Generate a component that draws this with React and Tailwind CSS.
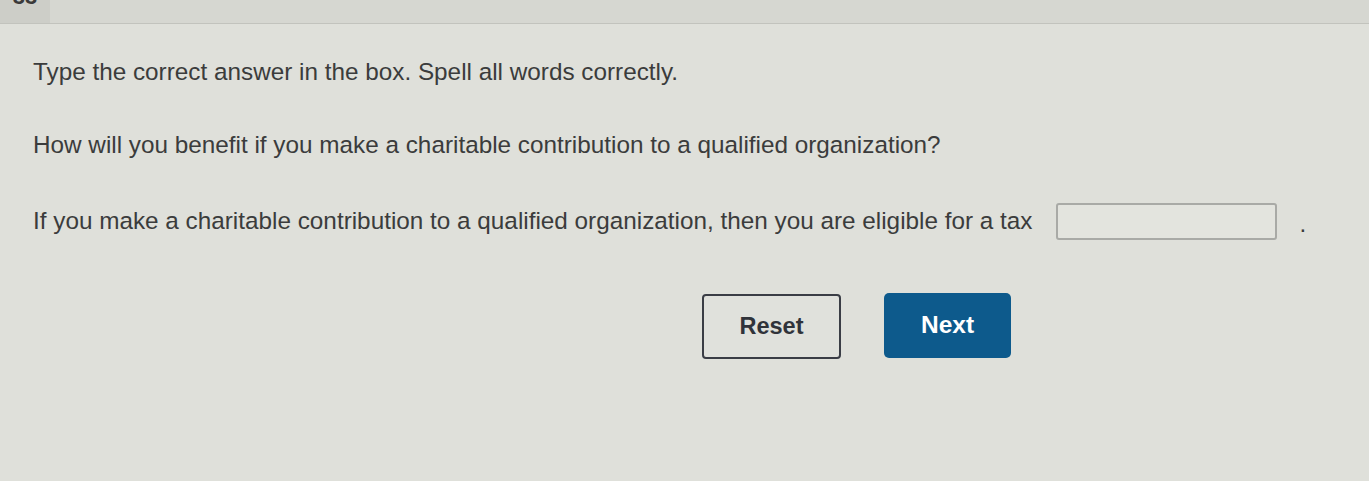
export default function App() {
  return (
    <div className="w-[1369px] h-[481px] overflow-hidden bg-[#dfe0da] text-[#3b3c3c]" style={{ fontFamily: '"Liberation Sans", Arial, sans-serif' }}>
      <div className="h-[24px] flex bg-[#d6d7d1] border-b border-[#c2c3bd]">
        <div className="w-[50px] h-full bg-[#cdcec8] flex items-start justify-center overflow-hidden">
          <span className="text-[22px] font-bold leading-none text-[#3a3a3a] -mt-[14px]">33</span>
        </div>
      </div>
      <div className="pl-[33px] pt-[34px]">
        <p className="text-[24.3px] leading-[28px]">Type the correct answer in the box. Spell all words correctly.</p>
        <p className="text-[24.3px] leading-[28px] mt-[45px]">How will you benefit if you make a charitable contribution to a qualified organization?</p>
        <div className="flex items-center mt-[43px] h-[38px]">
          <span className="text-[24.3px] leading-[28px]">If you make a charitable contribution to a qualified organization, then you are eligible for a tax</span>
          <div className="ml-[24px] w-[221px] h-[37px] border-2 border-[#a9aaa6] rounded-[3px] bg-[#e3e4de] shrink-0"></div>
          <span className="ml-[22px] text-[24.3px] leading-[28px] mt-[6px]">.</span>
        </div>
        <div className="flex mt-[54px] ml-[669px] gap-[43px]">
          <button className="w-[139px] h-[65px] border-2 border-[#3a3d45] rounded-[4px] bg-[#e0e1dc] text-[23.5px] font-bold text-[#30333a]">Reset</button>
          <button className="w-[127px] h-[65px] rounded-[5px] bg-[#0d5a8c] text-[24.5px] font-bold text-white -mt-[1px]">Next</button>
        </div>
      </div>
    </div>
  );
}
